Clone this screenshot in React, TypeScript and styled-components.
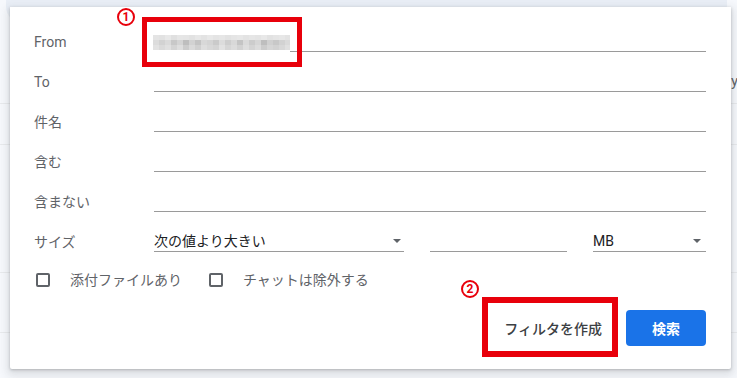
import styled, { createGlobalStyle } from 'styled-components'

const GlobalStyle = createGlobalStyle`
  html, body {
    margin: 0;
    padding: 0;
    background: #f6f8fc;
  }
  body {
    font-family: Roboto, 'Noto Sans CJK JP', sans-serif;
  }
`

const labels = ['From', 'To', '件名', '含む', '含まない']

// deterministic grey levels for the blurred address
const mosaic = [
  [228, 226, 232, 224, 230, 229, 226, 231, 227, 232, 228, 230, 226, 229, 231, 227, 230, 228, 232, 226, 229, 231, 227],
  [220, 210, 218, 200, 212, 190, 210, 196, 216, 212, 202, 220, 206, 216, 196, 218, 204, 214, 190, 208, 200, 210, 218],
  [226, 218, 224, 212, 222, 204, 218, 208, 222, 216, 212, 226, 214, 220, 210, 222, 212, 220, 204, 214, 210, 216, 224],
]

const App = () => {
  return (
    <>
      <GlobalStyle />
      <Page>
        <SearchBar />
        <MailList>
          <MailRow $h={80} />
          <MailRow $h={41}>
            <Peek>Today</Peek>
          </MailRow>
          <MailRow $h={128} />
          <MailRow $h={60} />
        </MailList>

        <Panel>
          {labels.map(label => (
            <FieldRow key={label}>
              <Label>{label}</Label>
              <Field />
            </FieldRow>
          ))}

          <FieldRow>
            <Label>サイズ</Label>
            <SizeGrid>
              <Select $pad={3}>
                <span>次の値より大きい</span>
                <Caret />
              </Select>
              <Field />
              <Select $pad={5}>
                <span>MB</span>
                <Caret />
              </Select>
            </SizeGrid>
          </FieldRow>

          <CheckRow>
            <CheckItem>
              <Box />
              <CheckLabel>添付ファイルあり</CheckLabel>
            </CheckItem>
            <CheckItem>
              <Box />
              <CheckLabel>チャットは除外する</CheckLabel>
            </CheckItem>
          </CheckRow>

          <Actions>
            <TextButton>フィルタを作成</TextButton>
            <PrimaryButton>検索</PrimaryButton>
          </Actions>
        </Panel>

        <Marker $x={117} $y={8}>1</Marker>
        <Highlight $x={142} $y={17} $w={160} $h={50} $b={5}>
          <svg width="137" height="22" viewBox="0 0 137 22">
            <rect width="137" height="22" fill="#fff" />
            {mosaic.map((row, r) =>
              row.map((v, c) => (
                <rect
                  key={`${r}-${c}`}
                  x={c * 6}
                  y={5 + r * 5}
                  width="6"
                  height="5"
                  fill={`rgb(${v},${v},${v})`}
                />
              ))
            )}
          </svg>
        </Highlight>

        <Marker $x={461} $y={280}>2</Marker>
        <Highlight $x={482} $y={297} $w={136} $h={60} $b={6} />
      </Page>
    </>
  )
}

const Page = styled.div`
  position: relative;
  width: 737px;
  height: 378px;
  overflow: hidden;
  background: #f6f8fc;
`

const SearchBar = styled.div`
  height: 24px;
  margin: 0 10px 0 6px;
  background: #e9eef6;
  border-radius: 0 0 18px 18px;
`

const MailList = styled.div`
  display: flex;
  flex-direction: column;
`

const MailRow = styled.div<{ $h: number }>`
  height: ${({ $h }) => $h}px;
  border-bottom: 1px solid #e8eaed;
  display: flex;
  justify-content: flex-end;
  align-items: flex-start;
  box-sizing: border-box;
`

const Peek = styled.span`
  font-size: 15px;
  color: #5f6368;
  margin-top: -32px;
  margin-right: -1px;
`

const Panel = styled.div`
  position: absolute;
  left: 10px;
  top: 7px;
  width: 721px;
  height: 362px;
  box-sizing: border-box;
  padding: 13px 25px 23px 24px;
  background: #fff;
  border-radius: 0 0 2px 2px;
  box-shadow: 0 1px 3px rgba(60, 64, 67, 0.3), 0 4px 8px 3px rgba(60, 64, 67, 0.12);
  display: flex;
  flex-direction: column;
`

const FieldRow = styled.div`
  display: grid;
  grid-template-columns: 120px 1fr;
  align-items: end;
  height: 40px;
  padding-bottom: 8px;
  box-sizing: border-box;
`

const Label = styled.div`
  font-size: 14px;
  line-height: 20px;
  color: #5f6368;
`

const Field = styled.div`
  height: 22px;
  border-bottom: 1px solid #9a9a9a;
  box-sizing: border-box;
`

const SizeGrid = styled.div`
  display: grid;
  grid-template-columns: 250px 137px 1fr;
  column-gap: 26px;
  align-items: end;
`

const Select = styled.div<{ $pad: number }>`
  height: 22px;
  box-sizing: border-box;
  border-bottom: 1px solid #9a9a9a;
  display: flex;
  align-items: flex-end;
  justify-content: space-between;
  padding-right: ${({ $pad }) => $pad}px;
  font-size: 14px;
  line-height: 20px;
  color: #202124;
`

const Caret = styled.i`
  width: 0;
  height: 0;
  margin-bottom: 8px;
  border-left: 4px solid transparent;
  border-right: 4px solid transparent;
  border-top: 4px solid #5f6368;
`

const CheckRow = styled.div`
  display: flex;
  align-items: center;
  gap: 25px;
  height: 40px;
`

const CheckItem = styled.label`
  display: flex;
  align-items: center;
`

const Box = styled.span`
  width: 14px;
  height: 14px;
  margin-left: 2px;
  box-sizing: border-box;
  border: 2px solid #5f6368;
  border-radius: 2px;
`

const CheckLabel = styled.span`
  margin-left: 20px;
  font-size: 14px;
  line-height: 20px;
  color: #5f6368;
`

const Actions = styled.div`
  display: flex;
  justify-content: flex-end;
  gap: 12px;
  margin-top: 10px;
`

const TextButton = styled.button`
  height: 36px;
  padding: 0 12px;
  border: none;
  background: transparent;
  font-family: inherit;
  font-size: 14px;
  font-weight: 500;
  color: #3c4043;
`

const PrimaryButton = styled.button`
  width: 80px;
  height: 36px;
  border: none;
  border-radius: 4px;
  background: #1a73e8;
  font-family: inherit;
  font-size: 14px;
  font-weight: 700;
  color: #fff;
`

// red annotations drawn over the screenshot
const Highlight = styled.div<{ $x: number; $y: number; $w: number; $h: number; $b: number }>`
  position: absolute;
  left: ${({ $x }) => $x}px;
  top: ${({ $y }) => $y}px;
  width: ${({ $w }) => $w}px;
  height: ${({ $h }) => $h}px;
  box-sizing: border-box;
  border: ${({ $b }) => $b}px solid #e8000b;
  padding: 8px 0 0 6px;
  display: flex;
  align-items: flex-start;
`

const Marker = styled.span<{ $x: number; $y: number }>`
  position: absolute;
  left: ${({ $x }) => $x}px;
  top: ${({ $y }) => $y}px;
  width: 18px;
  height: 18px;
  box-sizing: border-box;
  border: 2px solid #e8000b;
  border-radius: 50%;
  display: flex;
  align-items: center;
  justify-content: center;
  font-family: Roboto, sans-serif;
  font-size: 12px;
  font-weight: 700;
  color: #e8000b;
`

export default App
